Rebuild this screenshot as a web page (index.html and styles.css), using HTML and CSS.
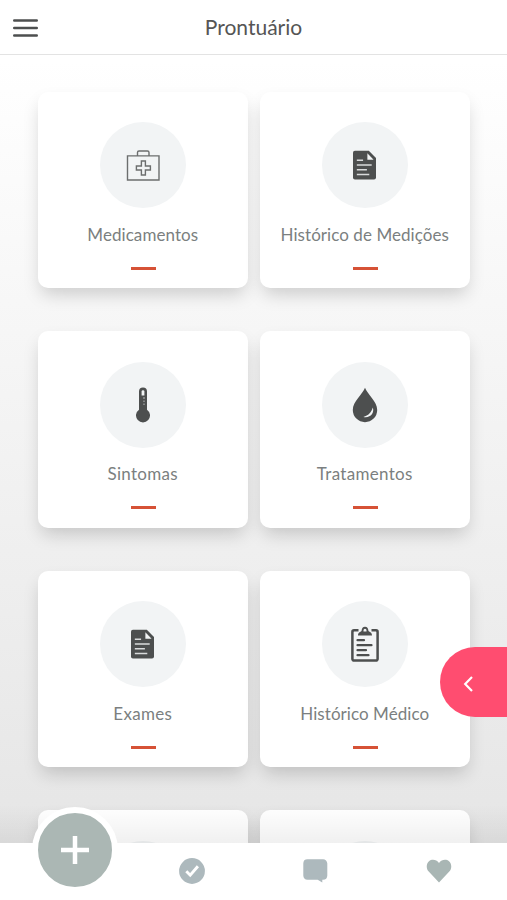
FILE: index.html
```html
<!DOCTYPE html>
<html lang="pt-BR">
<head>
<meta charset="utf-8">
<meta name="viewport" content="width=device-width, initial-scale=1">
<title>Prontuário</title>
<link rel="stylesheet" href="styles.css">
</head>
<body>
<svg class="defs" aria-hidden="true">
  <symbol id="file" viewBox="0 0 24 30">
    <path fill="#4d4f4f" d="M2 0h14.500L24 7.800V28a2 2 0 0 1-2 2H2a2 2 0 0 1-2-2V2a2 2 0 0 1 2-2z"/>
    <path fill="#f2f4f5" d="M15 2.800v6.700h6.500z"/>
    <path stroke="#d9dbdc" stroke-width="1.600" d="M4 10h6.500M4 15h15.500M4 20h10.500M4 25h13"/>
  </symbol>
</svg>
<div class="app">
  <header class="header">
    <button class="menu" aria-label="Menu"><svg width="25" height="18" viewBox="0 0 25 18"><path stroke="#4d4f4f" stroke-width="2.400" stroke-linecap="round" d="M1.200 1.500h22.600M1.200 9h22.600M1.200 16.500h22.600"/></svg></button>
    <h1 class="title">Prontuário</h1>
  </header>
  <main class="grid">
    <article class="card">
      <div class="disc"><svg width="34" height="32" viewBox="0 0 34 32" fill="none" stroke="#6c6e6e" stroke-width="1.400"><path d="M1.500 6.900H33V31H1.500zM11.500 6.900V3.500A1.500 1.500 0 0 1 13 2h8.500A1.500 1.500 0 0 1 23 3.500v3.400M15.400 12h4v5h5v4h-5v5h-4v-5h-5v-4h5z"/></svg></div>
      <h2 class="label">Medicamentos</h2><span class="dash"></span>
    </article>
    <article class="card">
      <div class="disc"><svg width="23" height="30"><use href="#file"/></svg></div>
      <h2 class="label">Histórico de Medições</h2><span class="dash"></span>
    </article>
    <article class="card">
      <div class="disc"><svg width="14" height="36" viewBox="0 0 14 36"><path fill="#4d4f4f" d="M3 4.500a4 4 0 0 1 8 0v18.200a7 7 0 1 1-8 0z"/><path fill="#f2f4f5" d="M5.600 4.600a1.400 1.400 0 0 1 2.800 0v3.900H5.600z"/><path stroke="#b9bbbc" stroke-width="1" d="M8 10v2M8 13.500v1.500M8 16.500V18"/></svg></div>
      <h2 class="label short">Sintomas</h2><span class="dash"></span>
    </article>
    <article class="card">
      <div class="disc"><svg width="26" height="36" viewBox="0 0 26 36"><path fill="#4d4f4f" d="M13 .8C15.500 7.500 25.200 14.500 25.200 23a12.200 12.200 0 0 1-24.400 0C.8 14.500 10.500 7.500 13 .8z"/><path fill="#f2f4f5" d="M20.800 20.500c2 5.500-2.800 11-9.400 9.400 5-1.200 8-4.600 9.400-9.400z"/></svg></div>
      <h2 class="label short">Tratamentos</h2><span class="dash"></span>
    </article>
    <article class="card">
      <div class="disc"><svg width="23" height="30"><use href="#file"/></svg></div>
      <h2 class="label short">Exames</h2><span class="dash"></span>
    </article>
    <article class="card">
      <div class="disc"><svg width="28" height="36" viewBox="0 0 28 36"><path fill="none" stroke="#4d4f4f" stroke-width="2.500" d="M7.500 4.300H3A1.600 1.600 0 0 0 1.400 5.900V33A1.600 1.600 0 0 0 3 34.600h22A1.600 1.600 0 0 0 26.600 33V5.900A1.600 1.600 0 0 0 25 4.300h-4.500"/><path fill="#4d4f4f" fill-rule="evenodd" d="M7 9.600c0-3 2-3.300 3.500-4.500.5-3 1.200-4.300 3.500-4.300s3 1.300 3.500 4.300C19 6.300 21 6.600 21 9.600zM14 2.800a1.500 1.500 0 0 0-1.500 1.500v1.200h3V4.300A1.500 1.500 0 0 0 14 2.800z"/><path stroke="#4d4f4f" stroke-width="2.200" stroke-linecap="round" d="M6.500 14.200H13M6.500 19.200h14M6.500 24.200h8.500M6.500 29.200h11"/></svg></div>
      <h2 class="label">Histórico Médico</h2><span class="dash"></span>
    </article>
    <article class="card"><div class="disc"></div></article>
    <article class="card"><div class="disc"></div></article>
  </main>
  <div class="fade"></div>
  <button class="drawer" aria-label="Abrir"><svg width="10" height="16" viewBox="0 0 10 16"><path fill="none" stroke="#fff" stroke-width="2.200" d="M9 1 2.200 8 9 15"/></svg></button>
  <nav class="nav">
    <a class="tab"><svg width="26" height="26" viewBox="0 0 26 26"><circle cx="13" cy="13" r="12.900" fill="#adb9bd"/><path fill="none" stroke="#fff" stroke-width="2.900" d="m7.300 13.300 3.900 3.900 7.700-9"/></svg></a>
    <a class="tab"><svg width="26" height="26" viewBox="0 0 26 26"><path fill="#adb9bd" d="M5.500 1.200H21a4.300 4.300 0 0 1 4.300 4.300v12a4.300 4.300 0 0 1-4.300 4.200h-.7v2.800l-4.600-2.800H5.500a4.300 4.300 0 0 1-4.200-4.200v-12a4.300 4.300 0 0 1 4.200-4.300z"/></svg></a>
    <a class="tab"><svg width="26" height="26" viewBox="0 0 26 26"><path fill="#a9b6b4" d="M13 24.500 2.700 13.500C-.2 10.300.3 5.500 3 3.200 6 .8 10.500 1.500 13 5.100c2.500-3.600 7-4.300 10-1.900 2.700 2.300 3.200 7.100.3 10.300z"/></svg></a>
    <button class="fab" aria-label="Adicionar"><svg width="28" height="28" viewBox="0 0 28 28"><path stroke="#fff" stroke-width="4.500" d="M14 0v28M0 14h28"/></svg></button>
  </nav>
</div>
</body>
</html>
```

FILE: styles.css
```css
* { box-sizing: border-box; }
body { margin: 0; font-family: Lato, "Liberation Sans", sans-serif; }
button { border: 0; padding: 0; font: inherit; }
svg { display: block; }
.defs { position: absolute; width: 0; height: 0; }
.app {
  position: relative;
  height: 900px;
  overflow: hidden;
  display: flex;
  flex-direction: column;
  background: linear-gradient(#fff 60px, #f8f8f8 270px, #f0f0f0 520px, #e7e7e7 800px, #e6e6e6 843px);
}
.header {
  flex: none;
  height: 55px;
  display: grid;
  grid-template-columns: 51px 1fr 51px;
  align-items: center;
  background: #fff;
  border-bottom: 1px solid #e3e3e3;
}
.menu { margin: 2px 0 0 13px; width: 25px; background: none; }
.title { margin: 0; text-align: center; font-size: 21px; line-height: 28px; font-weight: 400; color: #555; }
.grid {
  flex: 1;
  min-height: 0;
  overflow: hidden;
  padding: 36.500px 37.500px 0 38px;
  display: grid;
  grid-template-columns: 1fr 1fr;
  grid-auto-rows: 196.500px;
  gap: 43px 12.500px;
}
.card {
  display: flex;
  flex-direction: column;
  align-items: center;
  padding-top: 30.500px;
  background: #fff;
  border-radius: 10px;
  box-shadow: 0 9px 18px -3px rgba(0, 0, 0, .18);
}
.disc { flex: none; width: 86px; height: 86px; border-radius: 50%; display: grid; place-items: center; background: #f2f4f5; }
.label { margin: 14.500px 0 0; font-size: 17px; line-height: 24px; font-weight: 400; letter-spacing: .06px; color: #7b7f80; white-space: nowrap; }
.label.short { letter-spacing: .3px; }
.dash { width: 25px; height: 3px; margin: 20.200px 0 0; background: #d65236; }
.fade { position: absolute; inset: 805px 0 57px; background: linear-gradient(transparent, rgba(0, 0, 0, .06)); }
.drawer {
  position: absolute;
  right: 0;
  top: 647px;
  width: 67px;
  height: 70px;
  padding: 3px 0 0 23px;
  display: flex;
  align-items: center;
  background: #ff4d70;
  border-radius: 35px 0 0 35px;
}
.dash { margin-left: 1px; }
.nav {
  position: relative;
  flex: none;
  height: 57px;
  padding: 0 6px 1px 130px;
  display: grid;
  grid-template-columns: repeat(3, 1fr);
  background: #fff;
}
.tab { display: grid; place-items: center; }
.fab {
  position: absolute;
  left: 32px;
  top: -36.500px;
  width: 86px;
  height: 86px;
  display: grid;
  place-items: center;
  border: 6px solid #fff;
  border-radius: 50%;
  background: #abb7b4;
}
```
